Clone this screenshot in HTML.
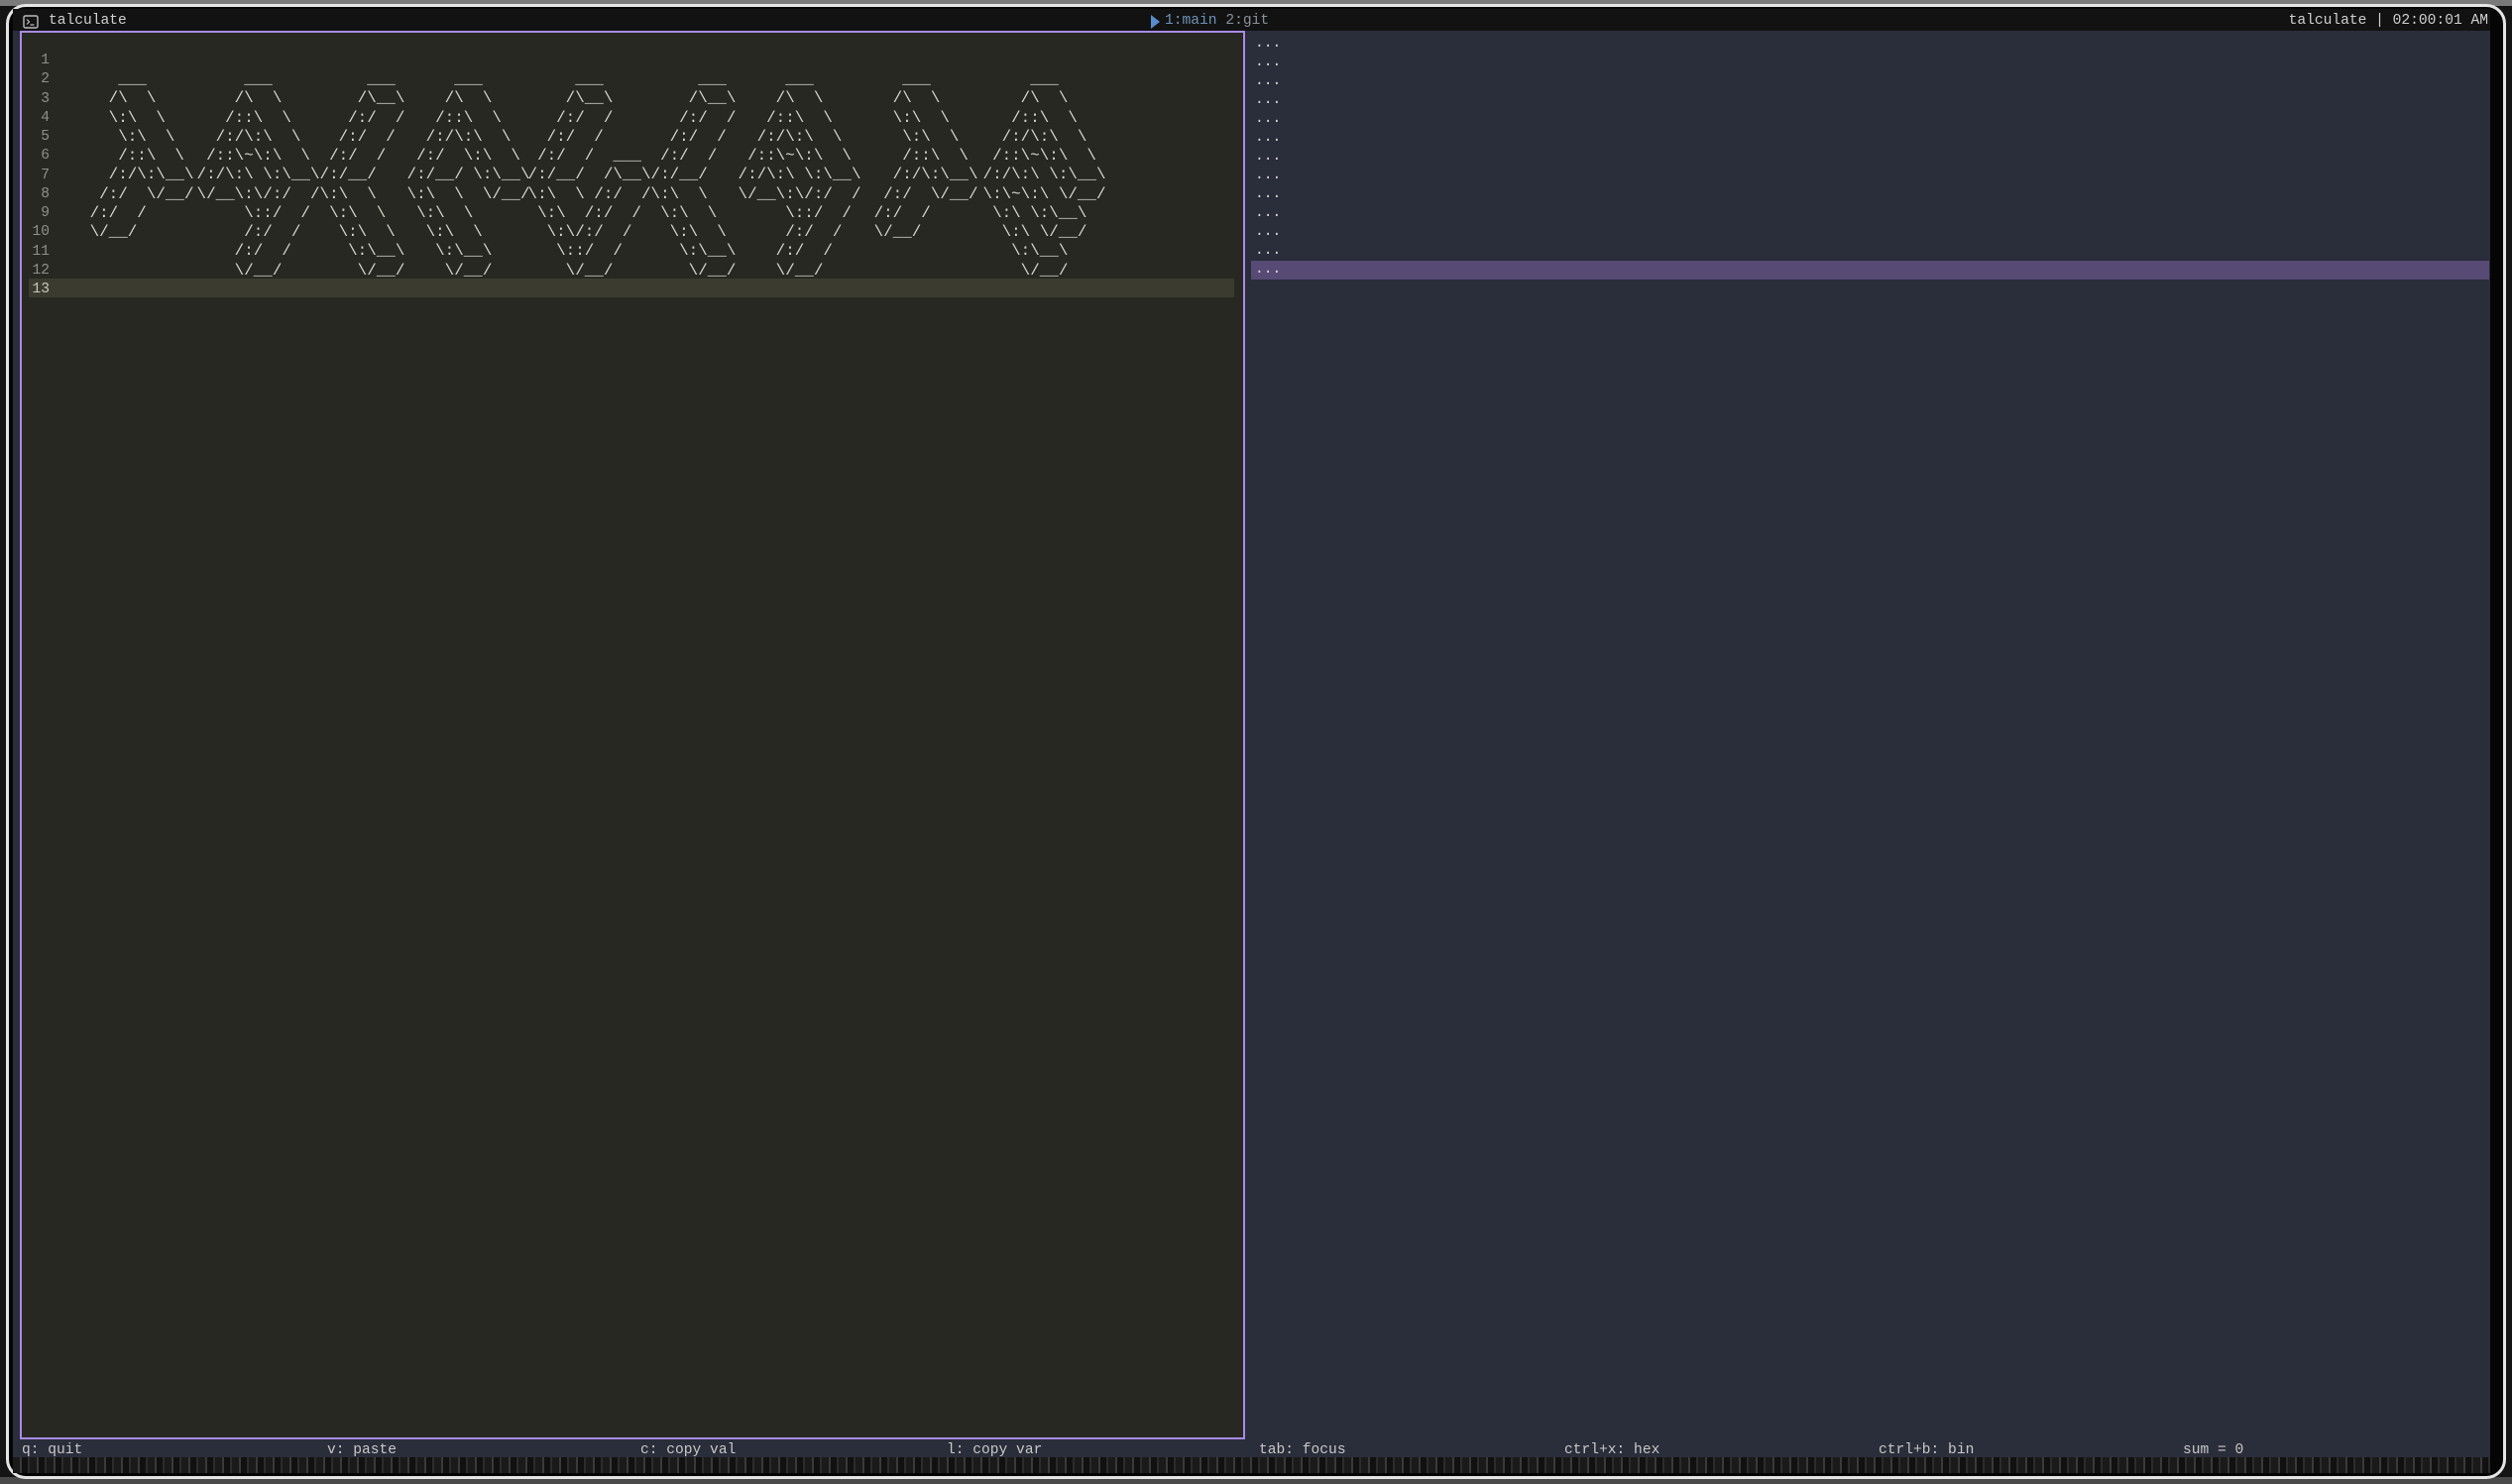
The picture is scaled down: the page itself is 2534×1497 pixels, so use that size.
<!DOCTYPE html>
<html><head><meta charset="utf-8"><style>
*{margin:0;padding:0;box-sizing:border-box}
html,body{width:2534px;height:1497px;overflow:hidden;background:#141414}
body{position:relative;font-family:"Liberation Mono","DejaVu Sans Mono",monospace;font-size:14.6px;}
.top{position:absolute;left:0;top:0;width:2534px;height:6px;background:#7a7a7a}
.bot{position:absolute;left:0;top:1490px;width:2534px;height:7px;background:#4a4a4a}
.frame{position:absolute;left:6px;top:4px;width:2522px;height:1488px;border:3px solid #e4e4e4;border-radius:20px;background:#050505;overflow:hidden}
.noise{position:absolute;left:13px;top:1470px;width:2499px;height:16px;background:repeating-linear-gradient(90deg,#1a1a1a 0 7px,#3a3a3a 7px 9px,#111 9px 15px,#2c2c2c 15px 17px)}
.title{position:absolute;left:13px;top:9px;width:2499px;height:22px;background:#121212;color:#c8c8c8}
.content{position:absolute;left:13px;top:31px;width:2499px;height:1439px;background:#2a2d3a}
.left{position:absolute;left:20px;top:31px;width:1236px;height:1421px;background:#272822;border:2.5px solid #a98ae6}
.t{position:absolute;white-space:pre;line-height:19.26px}
pre{position:absolute;margin:0;font-family:inherit;font-size:15.9px;line-height:19.26px;color:#d6d6cc;white-space:pre}
.ln{position:absolute;left:28px;width:22px;text-align:right;color:#8f908a;line-height:19.26px}
.dots{position:absolute;left:1266px;color:#d8d8d8;line-height:19px}
.sb{position:absolute;top:1453px;color:#c8c8c8;line-height:20px}
</style></head><body>
<div class="top"></div>
<div class="bot"></div>
<div class="frame"></div>
<div class="noise"></div>
<div class="title"></div>
<svg style="position:absolute;left:23px;top:15px" width="16" height="14" viewBox="0 0 16 14"><rect x="1" y="1" width="14" height="12" rx="1.5" fill="none" stroke="#bbb" stroke-width="1.4"/><path d="M4 4.5l2.5 2.5L4 9.5M7.5 10h4" fill="none" stroke="#bbb" stroke-width="1.2"/></svg>
<div class="t" style="left:49px;top:12px;color:#cfcfcf">talculate</div>
<svg style="position:absolute;left:1161px;top:15px" width="9" height="14" viewBox="0 0 9 14"><path d="M0 0L9 7L0 14Z" fill="#5a8ccc"/></svg>
<div class="t" style="left:1175px;top:12px;color:#6d92b8">1:main <span style="color:#8a8f98">2:git</span></div>
<div class="t" style="right:24px;top:12px;color:#cfcfcf">talculate | 02:00:01 AM</div>
<div class="content"></div>
<div class="left"></div>
<div style="position:absolute;left:29px;top:281px;width:1216px;height:19px;background:#3b3b2f"></div>
<div class="ln" style="top:52px">1<br>2<br>3<br>4<br>5<br>6<br>7<br>8<br>9<br>10<br>11<br>12<br><span style="color:#c8c8c0">13</span></div>
<pre style="left:62px;top:71px">      ___
     /\  \
     \:\  \
      \:\  \
      /::\  \
     /:/\:\__\
    /:/  \/__/
   /:/  /
   \/__/</pre>
<pre style="left:189px;top:71px">      ___
     /\  \
    /::\  \
   /:/\:\  \
  /::\~\:\  \
 /:/\:\ \:\__\
 \/__\:\/:/  /
      \::/  /
      /:/  /
     /:/  /
     \/__/</pre>
<pre style="left:313px;top:71px">      ___
     /\__\
    /:/  /
   /:/  /
  /:/  /
 /:/__/
 \:\  \
  \:\  \
   \:\  \
    \:\__\
     \/__/</pre>
<pre style="left:401px;top:71px">      ___
     /\  \
    /::\  \
   /:/\:\  \
  /:/  \:\  \
 /:/__/ \:\__\
 \:\  \  \/__/
  \:\  \
   \:\  \
    \:\__\
     \/__/</pre>
<pre style="left:523px;top:71px">      ___
     /\__\
    /:/  /
   /:/  /
  /:/  /  ___
 /:/__/  /\__\
 \:\  \ /:/  /
  \:\  /:/  /
   \:\/:/  /
    \::/  /
     \/__/</pre>
<pre style="left:647px;top:71px">      ___
     /\__\
    /:/  /
   /:/  /
  /:/  /
 /:/__/
 \:\  \
  \:\  \
   \:\  \
    \:\__\
     \/__/</pre>
<pre style="left:735px;top:71px">      ___
     /\  \
    /::\  \
   /:/\:\  \
  /::\~\:\  \
 /:/\:\ \:\__\
 \/__\:\/:/  /
      \::/  /
      /:/  /
     /:/  /
     \/__/</pre>
<pre style="left:853px;top:71px">      ___
     /\  \
     \:\  \
      \:\  \
      /::\  \
     /:/\:\__\
    /:/  \/__/
   /:/  /
   \/__/</pre>
<pre style="left:982px;top:71px">      ___
     /\  \
    /::\  \
   /:/\:\  \
  /::\~\:\  \
 /:/\:\ \:\__\
 \:\~\:\ \/__/
  \:\ \:\__\
   \:\ \/__/
    \:\__\
     \/__/</pre>
<div style="position:absolute;left:1262px;top:263px;width:1249px;height:19px;background:#574a75"></div>
<div class="dots" style="top:35px">...<br>...<br>...<br>...<br>...<br>...<br>...<br>...<br>...<br>...<br>...<br>...<br>...</div>
<div class="sb" style="left:22px">q: quit</div>
<div class="sb" style="left:330px">v: paste</div>
<div class="sb" style="left:646px">c: copy val</div>
<div class="sb" style="left:955px">l: copy var</div>
<div class="sb" style="left:1270px">tab: focus</div>
<div class="sb" style="left:1578px">ctrl+x: hex</div>
<div class="sb" style="left:1895px">ctrl+b: bin</div>
<div class="sb" style="left:2202px">sum = 0</div>
</body></html>
